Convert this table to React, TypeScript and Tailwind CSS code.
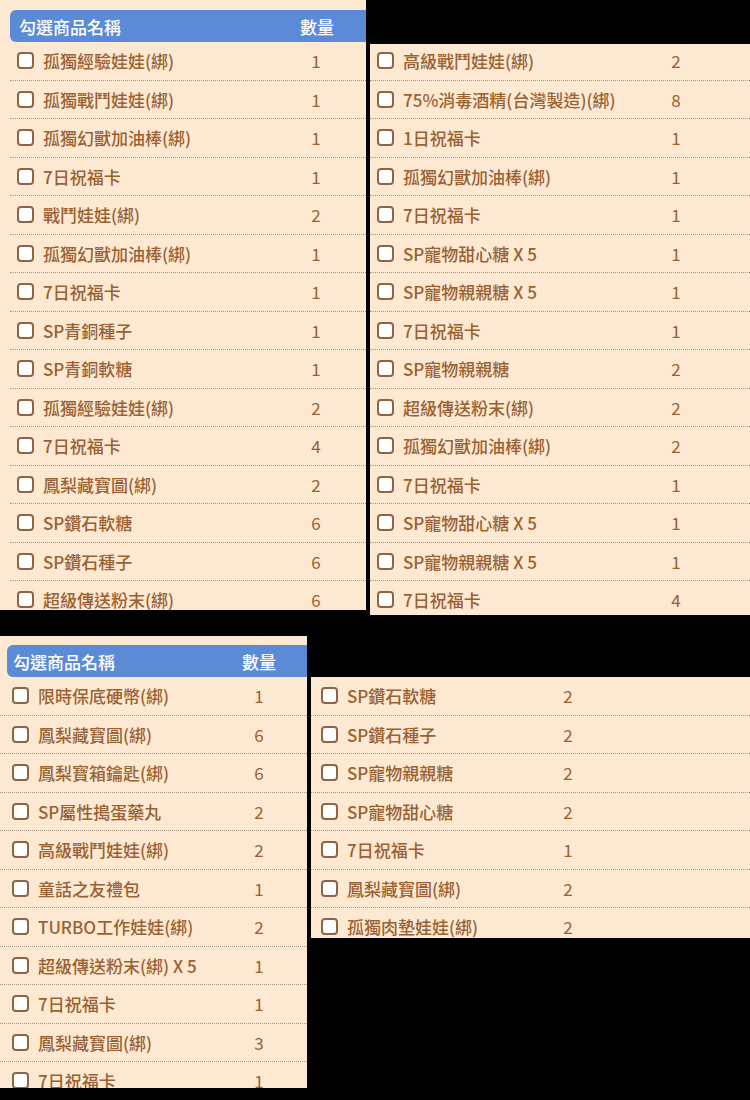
type Item = [string, number];

const LEFT_TOP: Item[] = [
  ['孤獨經驗娃娃(綁)', 1],
  ['孤獨戰鬥娃娃(綁)', 1],
  ['孤獨幻獸加油棒(綁)', 1],
  ['7日祝福卡', 1],
  ['戰鬥娃娃(綁)', 2],
  ['孤獨幻獸加油棒(綁)', 1],
  ['7日祝福卡', 1],
  ['SP青銅種子', 1],
  ['SP青銅軟糖', 1],
  ['孤獨經驗娃娃(綁)', 2],
  ['7日祝福卡', 4],
  ['鳳梨藏寶圖(綁)', 2],
  ['SP鑽石軟糖', 6],
  ['SP鑽石種子', 6],
  ['超級傳送粉末(綁)', 6],
];

const RIGHT_TOP: Item[] = [
  ['高級戰鬥娃娃(綁)', 2],
  ['75%消毒酒精(台灣製造)(綁)', 8],
  ['1日祝福卡', 1],
  ['孤獨幻獸加油棒(綁)', 1],
  ['7日祝福卡', 1],
  ['SP寵物甜心糖 X 5', 1],
  ['SP寵物親親糖 X 5', 1],
  ['7日祝福卡', 1],
  ['SP寵物親親糖', 2],
  ['超級傳送粉末(綁)', 2],
  ['孤獨幻獸加油棒(綁)', 2],
  ['7日祝福卡', 1],
  ['SP寵物甜心糖 X 5', 1],
  ['SP寵物親親糖 X 5', 1],
  ['7日祝福卡', 4],
];

const LEFT_BOTTOM: Item[] = [
  ['限時保底硬幣(綁)', 1],
  ['鳳梨藏寶圖(綁)', 6],
  ['鳳梨寶箱鑰匙(綁)', 6],
  ['SP屬性搗蛋藥丸', 2],
  ['高級戰鬥娃娃(綁)', 2],
  ['童話之友禮包', 1],
  ['TURBO工作娃娃(綁)', 2],
  ['超級傳送粉末(綁) X 5', 1],
  ['7日祝福卡', 1],
  ['鳳梨藏寶圖(綁)', 3],
  ['7日祝福卡', 1],
];

const RIGHT_BOTTOM: Item[] = [
  ['SP鑽石軟糖', 2],
  ['SP鑽石種子', 2],
  ['SP寵物親親糖', 2],
  ['SP寵物甜心糖', 2],
  ['7日祝福卡', 1],
  ['鳳梨藏寶圖(綁)', 2],
  ['孤獨肉墊娃娃(綁)', 2],
];

function Box() {
  return (
    <span className="block h-[17px] w-[17px] flex-none rounded-[4px] border-2 border-[#8f6446] bg-white" />
  );
}

// wide = the first screenshot's table, narrow = the second one
function Rows({ items, pad, wide }: { items: Item[]; pad: string; wide: boolean }) {
  return (
    <>
      {items.map(([name, qty], i) => (
        <div
          key={i}
          className={`flex h-[38.5px] flex-none items-center border-b border-dotted border-[#a89482] ${pad}`}
        >
          <Box />
          <span className={`ml-[9px] flex-none font-medium ${wide ? 'w-[253px]' : 'w-[201px]'}`}>
            {name}
          </span>
          <span className="w-[40px] flex-none text-center">{qty}</span>
        </div>
      ))}
    </>
  );
}

function Header({ wide }: { wide: boolean }) {
  return (
    <div className="flex h-[32px] flex-none items-center rounded-l-md bg-[#5b8bd7] font-medium text-white">
      <span className={`flex-none ${wide ? 'w-[287px] pl-[9px]' : 'w-[232px] pl-[6px]'}`}>
        勾選商品名稱
      </span>
      <span className="w-[40px] flex-none text-center">數量</span>
    </div>
  );
}

export default function App() {
  return (
    <div className="h-[1100px] w-[750px] overflow-hidden bg-black font-['Noto_Sans_CJK_TC',sans-serif] text-[17px] leading-none text-[#9a6133]">
      <div className="flex items-start gap-[4px]">
        <section className="flex h-[610px] w-[366px] flex-none flex-col overflow-hidden bg-[#fde9d2] pl-[10px] pt-[10px]">
          <Header wide />
          <Rows items={LEFT_TOP} pad="pl-[7px]" wide />
        </section>
        <section className="mt-[44px] flex h-[571px] w-[380px] flex-none flex-col overflow-hidden bg-[#fde9d2]">
          <div className="-mt-[2px] flex flex-col">
            <Rows items={RIGHT_TOP} pad="pl-[7px]" wide />
          </div>
        </section>
      </div>

      <div className="mt-[21px] flex items-start gap-[4px]">
        <section className="flex h-[452px] w-[307px] flex-none flex-col overflow-hidden bg-[#fde9d2] pt-[9px]">
          <div className="ml-[7px]">
            <Header wide={false} />
          </div>
          <Rows items={LEFT_BOTTOM} pad="pl-[12px]" wide={false} />
        </section>
        <section className="mt-[41px] flex h-[261px] flex-1 flex-col overflow-hidden bg-[#fde9d2]">
          <Rows items={RIGHT_BOTTOM} pad="pl-[10px]" wide={false} />
        </section>
      </div>
    </div>
  );
}
